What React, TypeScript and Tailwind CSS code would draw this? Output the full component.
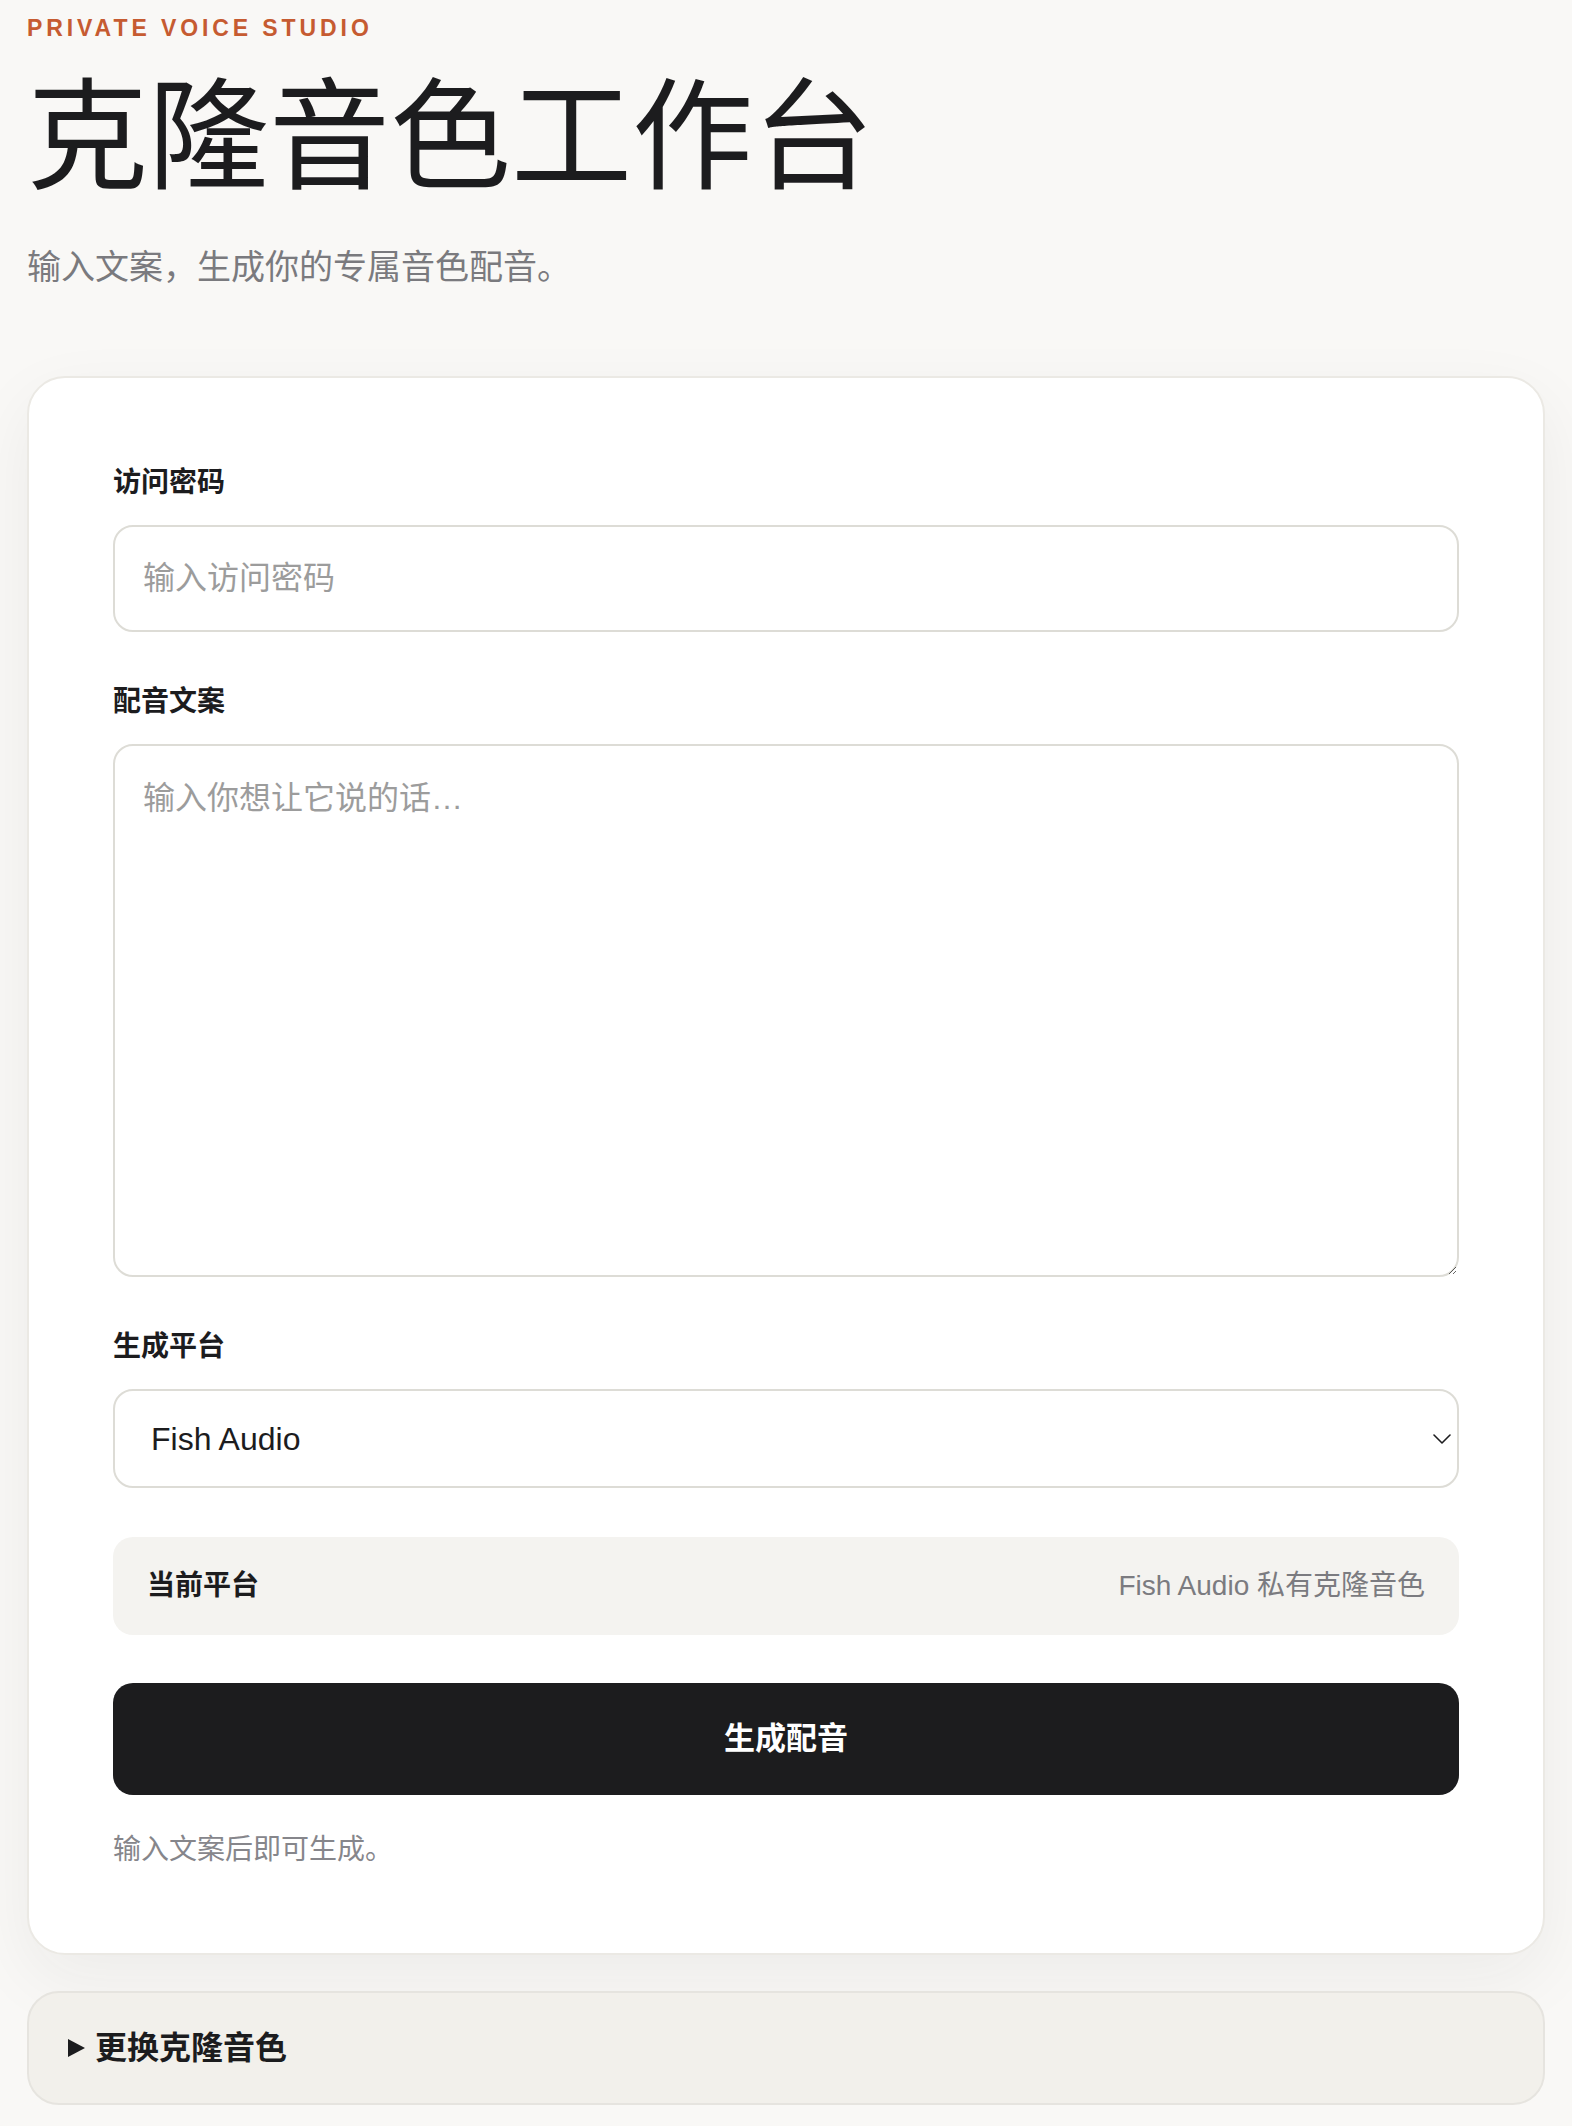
import React from "react";

function Label({ children }: { children: React.ReactNode }) {
  return (
    <label className="mb-[23px] block text-[28px] leading-[39px] font-bold text-[#1c1c1e]">
      {children}
    </label>
  );
}

export default function App() {
  return (
    <div className="min-h-screen bg-[#f9f8f6] px-[27px] pt-[14px] pb-[20px] font-['Liberation_Sans','Noto_Sans_CJK_SC',sans-serif] text-[#1c1c1e]">
      <p className="text-[23px] leading-[28px] font-bold tracking-[0.17em] text-[#c65b31]">
        PRIVATE VOICE STUDIO
      </p>
      <h1 className="mt-[35px] text-[121px] leading-[120px] font-normal text-[#1c1c1e]">
        克隆音色工作台
      </h1>
      <p className="mt-[47px] text-[34px] leading-[46px] text-[#7a7a7e]">
        输入文案，生成你的专属音色配音。
      </p>

      <div className="mt-[86px] rounded-[38px] border-2 border-[#ebe9e4] bg-white px-[84px] pt-[85px] pb-[84px] shadow-[0_24px_70px_rgba(40,36,30,0.06)]">
        <div>
          <Label>访问密码</Label>
          <input
            type="password"
            placeholder="输入访问密码"
            className="block h-[107px] w-full rounded-[20px] border-2 border-[#dddcd6] bg-white px-[28px] text-[32px] outline-none placeholder:text-[#9c9c9c]"
          />
        </div>

        <div className="mt-[50px]">
          <Label>配音文案</Label>
          <textarea
            placeholder="输入你想让它说的话…"
            className="block h-[533px] w-full resize-y rounded-[20px] border-2 border-[#dddcd6] bg-white px-[28px] pt-[28px] text-[32px] leading-[1.5] outline-none placeholder:text-[#9c9c9c]"
          />
        </div>

        <div className="mt-[50px]">
          <Label>生成平台</Label>
          <div className="relative">
            <select
              defaultValue="fish"
              className="block h-[99px] w-full appearance-none rounded-[20px] border-2 border-[#dddcd6] bg-white pl-[36px] pr-[48px] text-[32px] text-[#1c1c1e] outline-none"
            >
              <option value="fish">Fish Audio</option>
            </select>
            <svg
              className="pointer-events-none absolute right-[8px] top-1/2 -translate-y-1/2 text-[#1c1c1e]"
              width="18"
              height="10"
              viewBox="0 0 18 10"
              fill="none"
            >
              <path d="M1 1l8 8 8-8" stroke="currentColor" strokeWidth="1.6" strokeLinecap="round" strokeLinejoin="round" />
            </svg>
          </div>
        </div>

        <div className="mt-[49px] flex h-[98px] items-center justify-between rounded-[20px] bg-[#f4f3f0] px-[34px]">
          <span className="text-[28px] font-bold text-[#1c1c1e]">当前平台</span>
          <span className="text-[28px] text-[#7b7b80]">Fish Audio 私有克隆音色</span>
        </div>

        <button
          type="button"
          className="mt-[48px] flex h-[112px] w-full items-center justify-center rounded-[20px] bg-[#1c1c1e] text-[31px] font-bold text-white"
        >
          生成配音
        </button>

        <p className="mt-[35px] text-[28px] leading-[39px] text-[#86868b]">输入文案后即可生成。</p>
      </div>

      <details className="mt-[36px] rounded-[32px] border-2 border-[#e6e4df] bg-[#f2f0eb]">
        <summary className="flex h-[110px] cursor-pointer list-none items-center gap-[9px] pl-[39px] text-[32px] font-bold text-[#1c1c1e] [&::-webkit-details-marker]:hidden">
          <svg width="18" height="18" viewBox="0 0 18 18" className="shrink-0">
            <path d="M0 0L17 9L0 18Z" fill="#1c1c1e" />
          </svg>
          更换克隆音色
        </summary>
      </details>
    </div>
  );
}
